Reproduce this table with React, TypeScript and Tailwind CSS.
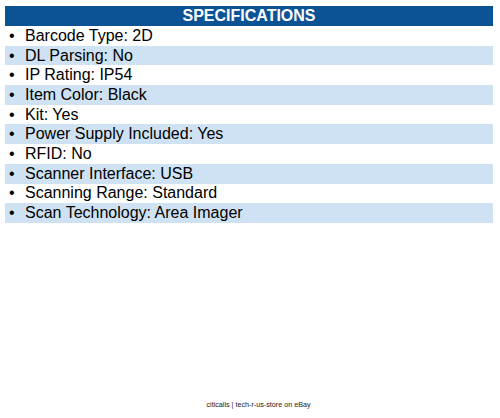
const specs = [
  "Barcode Type: 2D",
  "DL Parsing: No",
  "IP Rating: IP54",
  "Item Color: Black",
  "Kit: Yes",
  "Power Supply Included: Yes",
  "RFID: No",
  "Scanner Interface: USB",
  "Scanning Range: Standard",
  "Scan Technology: Area Imager",
]

export default function App() {
  return (
    <div className="flex h-[418px] w-[500px] flex-col bg-white font-['Liberation_Sans',Arial,sans-serif] text-black">
      <div className="ml-[5px] mt-[6px] w-[488px]">
        <div className="flex h-[20px] items-center justify-center bg-[#0b5394] text-[16px] font-bold leading-[20px] text-white">
          SPECIFICATIONS
        </div>
        <ul>
          {specs.map((spec, i) => (
            <li
              className={`flex h-[19.7px] items-center pl-[4px] text-[16px] leading-[20px] ${
                i % 2 === 1 ? "bg-[#cfe2f3]" : "bg-white"
              }`}
              key={spec}
            >
              <span className="w-[16px]">•</span>
              <span>{spec}</span>
            </li>
          ))}
        </ul>
      </div>
      <p className="mt-auto pb-[8px] pl-[17px] text-center text-[7.2px] leading-[10px] text-[#222]">
        citicalls | tech-r-us-store on eBay
      </p>
    </div>
  )
}
